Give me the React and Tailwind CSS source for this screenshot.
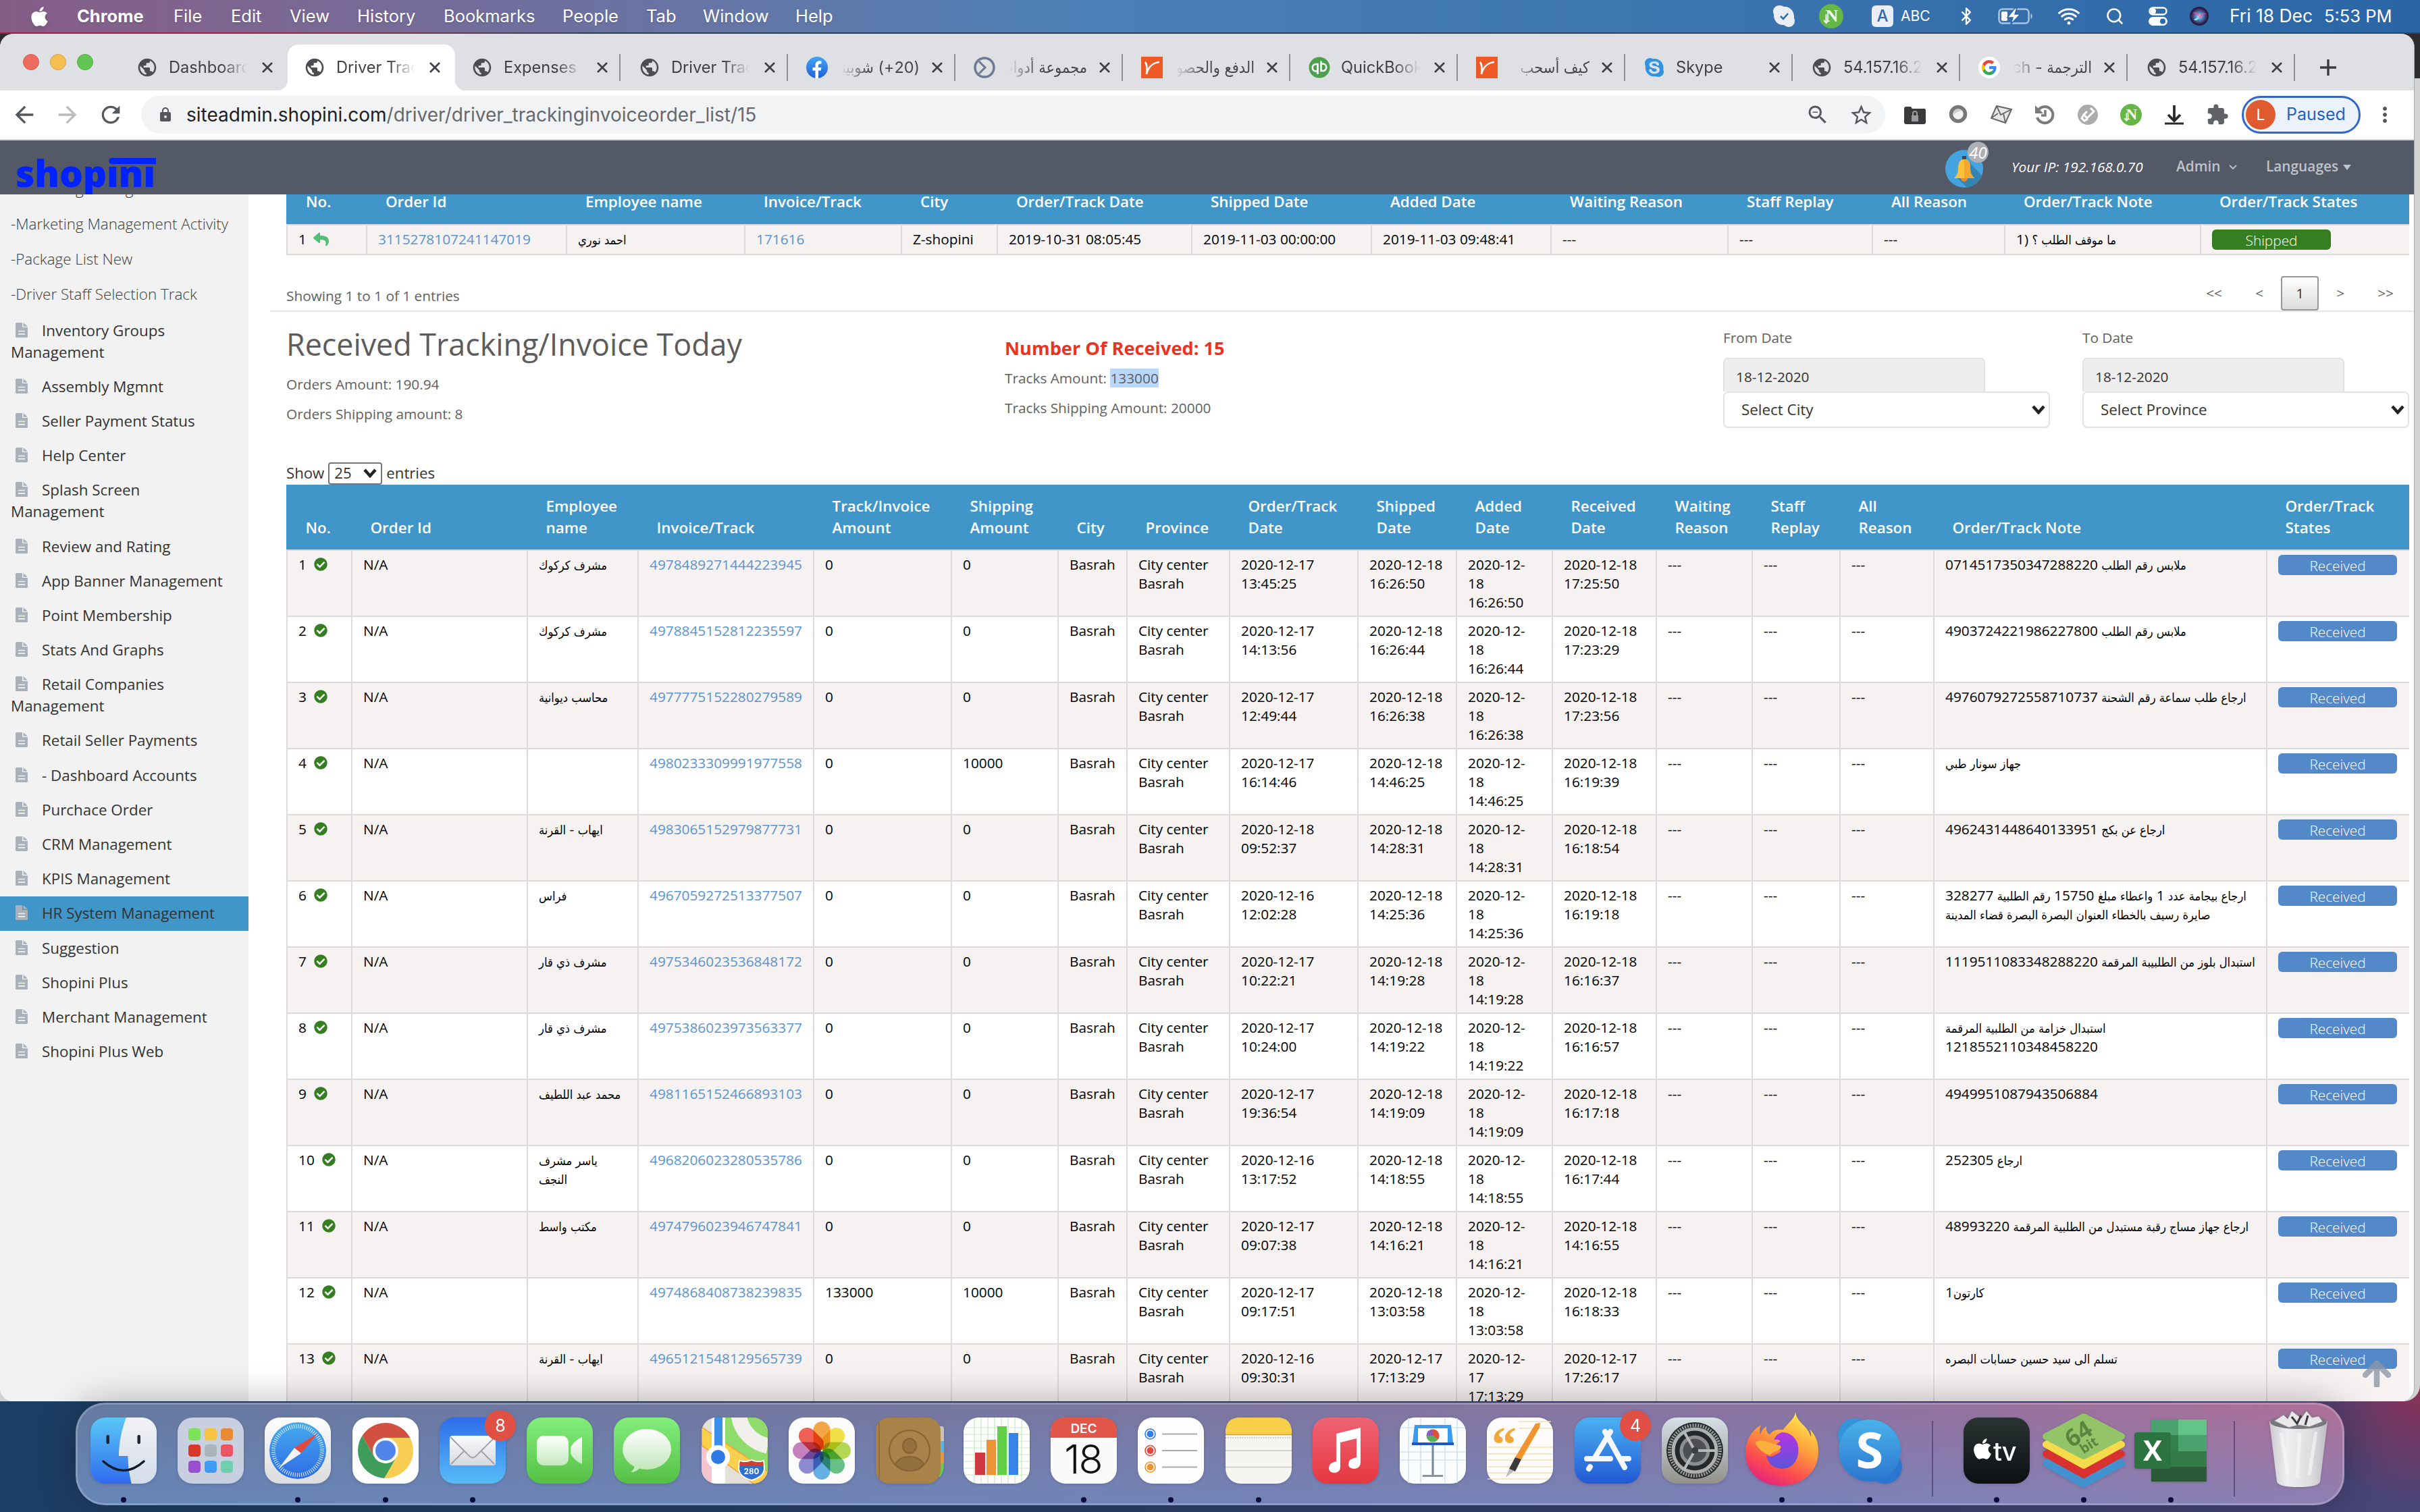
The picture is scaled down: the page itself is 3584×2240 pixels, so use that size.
import React from "react";
import { MdArrowBack, MdArrowForward, MdRefresh, MdLock, MdStarBorder, MdExtension, MdMoreVert, MdZoomOut, MdPublic } from "react-icons/md";
import { FaApple, FaCheckCircle, FaReply } from "react-icons/fa";
import { IoWifi, IoLogoSkype } from "react-icons/io5";
import { Search, Bluetooth } from "lucide-react";

/* ---------- text helpers ---------- */

const ARABIC = /([\u0600-\u06FF]+(?: +[\u0600-\u06FF]+)*)/;

function Mixed({ children }) {
  return children.split(ARABIC).map((part, i) =>
    i % 2 ? (
      <span key={i} className="font-['DejaVu_Sans_Condensed','DejaVu_Sans',sans-serif] text-[18.2px] leading-none">
        {part}
      </span>
    ) : (
      part
    )
  );
}

const Lines = ({ items }) =>
  items.map((line, i) => (
    <div key={i} className="whitespace-nowrap">
      <Mixed>{line}</Mixed>
    </div>
  ));

/* ---------- menu bar ---------- */

const MENUS = [
  ["Chrome", "w-[143px] font-bold"],
  ["File", "w-[85px]"],
  ["Edit", "w-[87px]"],
  ["View", "w-[100px]"],
  ["History", "w-[128px]"],
  ["Bookmarks", "w-[176px]"],
  ["People", "w-[124px]"],
  ["Tab", "w-[84px]"],
  ["Window", "w-[137px]"],
  ["Help", "w-[60px]"],
];

function NBadge({ className }) {
  return (
    <svg viewBox="0 0 36 36" className={className}>
      <circle cx="18" cy="18" r="18" fill="#64b745" />
      <text x="19" y="26" textAnchor="middle" fontFamily="Liberation Serif, serif" fontWeight="700" fontSize="26" fill="#f0f6ec">N</text>
      <path d="M10.500 15v13m-3.500-4l3.500 4 3.500-4" stroke="#f0f6ec" strokeWidth="2" fill="none" />
    </svg>
  );
}

function MenuBar() {
  return (
    <div className="flex h-12 shrink-0 items-center bg-linear-to-r from-[#865d87] via-[#4a80b6] via-45% to-[#2a66a6] font-['Inter',sans-serif] text-[25.5px] text-white">
      <div className="flex w-[114px] pl-[42px]">
        <FaApple className="size-[33px] drop-shadow-md" />
      </div>
      <div className="flex text-shadow-sm">
        {MENUS.map(([label, cls]) => (
          <div key={label} className={cls}>{label}</div>
        ))}
      </div>
      <div className="ml-auto flex w-[958px] items-center">
        <svg viewBox="0 0 32 32" className="w-8">
          <path d="M9 0C4 0 0 4 0 9c0 2 .6 3 1 4-.8 9 6 17 15 16 1 .6 4 3 7 3 5 0 9-4 9-9 0-2-.6-3-1-4C32 9 25 1 16 2 14 .7 12 0 9 0z" fill="#e9eef5" />
          <path d="M11 16l4 4 7-8" stroke="#2f6ca8" strokeWidth="2.600" fill="none" />
        </svg>
        <NBadge className="ml-9 w-9" />
        <div className="ml-[42px] flex size-8 items-center justify-center rounded-[6px] bg-[#e9eef5] text-[24px] font-medium text-[#2f6ca8]">A</div>
        <div className="ml-[11px] w-[43px] text-[21px]">ABC</div>
        <Bluetooth className="ml-10 size-[28px]" strokeWidth={2} />
        <svg viewBox="0 0 54 26" className="ml-[33px] w-[54px]">
          <rect x="1.500" y="2.500" width="44" height="21" rx="5" stroke="#a9c5e2" strokeWidth="2.500" fill="none" />
          <rect x="5" y="6" width="9" height="14" rx="2" fill="#fff" />
          <path d="M25 1L14 15h8l-3 10L33 10h-8l3-9z" fill="#fff" stroke="#2d6aaa" strokeWidth="1.500" />
          <path d="M48.500 9v8c3-1 3-7 0-8z" fill="#a9c5e2" />
        </svg>
        <IoWifi className="ml-[32px] size-[38px]" />
        <Search className="ml-[35px] size-[28px]" strokeWidth={2.2} />
        <svg viewBox="0 0 28 28" className="ml-[36px] w-7">
          <rect x="1.500" y="1.500" width="25" height="10" rx="5" stroke="#fff" strokeWidth="2.400" fill="none" />
          <circle cx="7" cy="6.500" r="4" fill="#fff" />
          <rect y="15" width="28" height="13" rx="6.500" fill="#fff" />
          <circle cx="21" cy="21.500" r="4" fill="#2d6aaa" />
        </svg>
        <svg viewBox="0 0 28 28" className="ml-[33px] w-7">
          <defs>
            <radialGradient id="siri">
              <stop offset="0" stopColor="#e8fbff" />
              <stop offset=".4" stopColor="#5d8fd0" />
              <stop offset="1" stopColor="#2a1c44" />
            </radialGradient>
          </defs>
          <circle cx="14" cy="14" r="14" fill="#2a1c44" />
          <circle cx="14" cy="14" r="12" fill="url(#siri)" />
          <path d="M4 9c7-3 11 1 10 5 3-5 7-6 11-3-5 0-8 3-10 7-2-5-6-7-11-9z" fill="#e0559a" opacity=".7" />
          <path d="M14 14l-8 5c4 3 7 0 8-5z" fill="#6ff0e0" />
        </svg>
        <div className="ml-[31px] w-[140px] text-[26.400px]">Fri 18 Dec</div>
        <div className="text-[25.500px]">5:53 PM</div>
      </div>
    </div>
  );
}

/* ---------- browser tabs ---------- */

const Globe = () => <MdPublic className="size-[34px] text-[#4b4d51]" />;

const Facebook = () => (
  <svg viewBox="0 0 32 32" className="size-8">
    <defs>
      <linearGradient id="fb" x2="0" y2="1">
        <stop stopColor="#41a5f5" />
        <stop offset="1" stopColor="#2160d8" />
      </linearGradient>
    </defs>
    <circle cx="16" cy="16" r="16" fill="url(#fb)" />
    <path d="M13.500 32V20.500H9.500V16h4v-3.500c0-4 2.400-6.200 6-6.200 1.700 0 3 .3 3 .3v4h-2c-2 0-2.500 1.200-2.500 2.500V16h4.400l-.7 4.500H18V32z" fill="#fff" />
  </svg>
);
const Ring = () => (
  <svg viewBox="0 0 32 32" className="size-8">
    <circle cx="16" cy="16" r="14" stroke="#6b7c93" strokeWidth="3.500" fill="none" />
    <path d="M8 7l9 9-9 9" stroke="#6b7c93" strokeWidth="3" fill="none" />
  </svg>
);
const Orange = () => (
  <svg viewBox="0 0 32 32" className="size-8">
    <path d="M0 0h32v32H0z" fill="#ee5a26" />
    <path d="M6 8c3 3 3 9 2 18 2-9 8-17 19-18" stroke="#fff" strokeWidth="2.600" fill="none" />
  </svg>
);
const QuickBooks = () => (
  <svg viewBox="0 0 32 32" className="size-8">
    <circle cx="16" cy="16" r="15.500" fill="#4c9f4c" />
    <path d="M14 21.500h-3a5 5 0 0 1 0-10.500h2.500v15M18 10.500h3a5 5 0 0 1 0 10.500h-2.500V6.500" stroke="#fff" strokeWidth="2.600" fill="none" />
  </svg>
);
const SkypeIcon = () => <IoLogoSkype className="size-[34px] text-[#2f93e0]" />;
const Google = () => (
  <svg viewBox="0 0 32 32" className="size-8">
    <circle cx="16" cy="16" r="16" fill="#fff" />
    <path d="M26.500 16.200c0-.8-.1-1.500-.2-2.200H16v4.300h5.900c-.3 1.400-1 2.500-2.200 3.300v2.800h3.600c2-1.900 3.200-4.700 3.200-8.200z" fill="#4285f4" />
    <path d="M16 27c2.900 0 5.400-1 7.200-2.600l-3.500-2.800c-1 .7-2.200 1.100-3.700 1.100-2.900 0-5.300-1.900-6.200-4.500H6.200V21A11 11 0 0 0 16 27z" fill="#34a853" />
    <path d="M9.800 18.200a6.600 6.600 0 0 1 0-4.300V11H6.200a11 11 0 0 0 0 10z" fill="#fbbc05" />
    <path d="M16 9.400c1.600 0 3 .6 4.200 1.600l3.100-3.100A11 11 0 0 0 6.200 11l3.600 2.900c.9-2.600 3.300-4.500 6.200-4.500z" fill="#ea4335" />
  </svg>
);

const TABS = [
  { Icon: Globe, title: "Dashboard" },
  { Icon: Globe, title: "Driver Track", active: true },
  { Icon: Globe, title: "Expenses", sep: true },
  { Icon: Globe, title: "Driver Track", sep: true },
  { Icon: Facebook, title: "(20+) شوبيني", rtl: true, sep: true },
  { Icon: Ring, title: "مجموعة أدوات", rtl: true, sep: true },
  { Icon: Orange, title: "الدفع والحصول", rtl: true, sep: true },
  { Icon: QuickBooks, title: "QuickBooks", sep: true },
  { Icon: Orange, title: "كيف أسحب", rtl: true, sep: true },
  { Icon: SkypeIcon, title: "Skype", sep: true },
  { Icon: Globe, title: "54.157.16.2", sep: true },
  { Icon: Google, title: "الترجمة - Search", rtl: true, sep: true },
  { Icon: Globe, title: "54.157.16.2", sep: true },
];

function Tab({ Icon, title, active, rtl, sep }) {
  return (
    <div className={active ? "relative flex h-[68px] w-[248px] items-center rounded-t-[16px] bg-white pl-6" : "relative flex h-[68px] w-[248px] items-center pl-6"}>
      {active && (
        <>
          <div className="absolute -left-4 bottom-0 size-4 bg-[radial-gradient(circle_at_0_0,transparent_16px,white_16.5px)]" />
          <div className="absolute -right-4 bottom-0 size-4 bg-[radial-gradient(circle_at_100%_0,transparent_16px,white_16.5px)]" />
        </>
      )}
      <div className="flex w-8 justify-center">
        <Icon />
      </div>
      {rtl ? (
        <div dir="rtl" className="ml-4 w-[120px] overflow-hidden whitespace-nowrap font-['Inter','DejaVu_Sans_Condensed','DejaVu_Sans',sans-serif] text-[23.4px] leading-9 text-[#45484c] [mask-image:linear-gradient(to_left,black_62%,transparent_97%)]">
          {title}
        </div>
      ) : (
        <div className="ml-4 w-[120px] overflow-hidden whitespace-nowrap text-[23.6px] leading-9 text-[#3e4145] [mask-image:linear-gradient(to_right,black_65%,transparent_97%)]">
          {title}
        </div>
      )}
      <svg viewBox="0 0 16 16" className="ml-[18px] size-4">
        <path d="M1 1l14 14M15 1L1 15" stroke="#3e4145" strokeWidth="2.700" />
      </svg>
      {sep && <div className="ml-[17px] h-10 w-[2px] bg-[#8b8e93]" />}
    </div>
  );
}

function TabStrip() {
  return (
    <div className="flex h-[84px] items-end bg-[#dee0e4] font-['Inter',sans-serif]">
      <div className="flex w-[178px] gap-4 self-center pl-[34px]">
        <div className="size-6 rounded-full border border-[#d95a50] bg-[#ec6a5e]" />
        <div className="size-6 rounded-full border border-[#dda23c] bg-[#f4bf50]" />
        <div className="size-6 rounded-full border border-[#50a93c] bg-[#61c654]" />
      </div>
      {TABS.map((t, i) => (
        <Tab key={i} {...t} />
      ))}
      <svg viewBox="0 0 24 24" className="mb-[22px] ml-[34px] size-6">
        <path d="M12 0v24M0 12h24" stroke="#3b3d41" strokeWidth="3.400" />
      </svg>
    </div>
  );
}

/* ---------- toolbar ---------- */

const Cell = ({ children }) => <div className="flex w-16 items-center justify-center">{children}</div>;

function Toolbar() {
  return (
    <div className="flex h-[74px] items-center border-b-2 border-[#d5d6de] bg-white font-['Inter',sans-serif]">
      <div className="flex w-[209px] text-[#54575b]">
        <MdArrowBack className="ml-4 size-10" />
        <MdArrowForward className="ml-6 size-10 text-[#b9bbbe]" />
        <MdRefresh className="ml-[24px] size-10" />
      </div>
      <div className="flex h-14 w-[2583px] items-center rounded-full bg-[#f1f3f4] pr-1 pl-[24px] text-[28px] text-[#66696e]">
        <MdLock className="size-[24px] text-[#54575b]" />
        <div className="ml-[19px] flex-1">
          <span className="text-[#202124]">siteadmin.shopini.com</span>/driver/driver_trackinginvoiceorder_list/15
        </div>
        <Cell><MdZoomOut className="size-9 text-[#54575b]" /></Cell>
        <Cell><MdStarBorder className="size-[37px] text-[#54575b]" /></Cell>
      </div>
      <div className="ml-3 flex">
        <Cell>
          <svg viewBox="0 0 34 28" className="w-[34px]">
            <path d="M1 5q0-3 3-3h7l2 3h18q2 0 2 3v17q0 3-3 3H4q-3 0-3-3z" fill="#3a3a3c" />
            <rect x="12" y="15" width="10" height="9" fill="#9a9a9c" />
            <path d="M14 15v-3q0-3 3-3t3 3v3" stroke="#9a9a9c" strokeWidth="2" fill="none" />
          </svg>
        </Cell>
        <Cell>
          <svg viewBox="0 0 28 30" className="w-7">
            <circle cx="14" cy="14" r="10.500" fill="#f2f2f2" stroke="#777" strokeWidth="5.500" />
            <path d="M7 10q6-6 13-1-8 0-12 6z" fill="#ccc" />
          </svg>
        </Cell>
        <Cell>
          <svg viewBox="0 0 34 30" className="w-[34px]">
            <path d="M10 2l22 5-9 20L2 20z" fill="#e6e6e6" stroke="#666" strokeWidth="2" />
            <path d="M10 2l6 13L32 7M2 20l10-7M23 27l-3-14" stroke="#666" strokeWidth="1.800" fill="none" />
          </svg>
        </Cell>
        <Cell>
          <svg viewBox="0 0 32 32" className="w-8">
            <path d="M6 10a12 12 0 1 1-1 10" stroke="#7b7b7b" strokeWidth="4" fill="none" />
            <path d="M2 2v12h12z" fill="#7b7b7b" />
            <path d="M17 9v8h-6" stroke="#7b7b7b" strokeWidth="3.500" fill="none" />
          </svg>
        </Cell>
        <Cell>
          <svg viewBox="0 0 32 32" className="w-8">
            <circle cx="16" cy="16" r="15" fill="#a9abad" />
            <path d="M20 6l5 5-10 10-5-5 5-5M10 16l-3 5 4 4 5-3" stroke="#fff" strokeWidth="3" fill="none" />
          </svg>
        </Cell>
        <Cell><NBadge className="w-8" /></Cell>
        <Cell>
          <svg viewBox="0 0 30 30" className="w-[30px]">
            <path d="M15 1v22M6 15l9 9 9-9" stroke="#2a2a2a" strokeWidth="3.800" fill="none" />
            <path d="M1 28h28" stroke="#2a2a2a" strokeWidth="3" />
          </svg>
        </Cell>
        <Cell><MdExtension className="size-[34px] text-[#5f6368]" /></Cell>
      </div>
      <div className="ml-1 flex h-14 w-[176px] items-center rounded-full border-[3px] border-[#2f66cc] bg-[#ecf2fa] pl-[3px]">
        <div className="flex size-11 items-center justify-center rounded-full bg-[#e05a30] text-[23px] text-white">L</div>
        <div className="ml-[16px] text-[25px] text-[#2a5fc0]">Paused</div>
      </div>
      <MdMoreVert className="ml-[18px] size-9 text-[#54575b]" />
    </div>
  );
}

/* ---------- site header ---------- */

function SiteHeader() {
  return (
    <div className="relative z-10 flex h-20 overflow-hidden bg-[#535966] text-[20.8px]">
      <div className="relative ml-[23px] h-20 text-[55px] leading-[68px] font-extrabold tracking-[-0.2px] text-[#0022ff]">
        <div className="pt-[14px]">shopini</div>
        <div className="absolute top-[26px] -right-px h-[9px] w-[65px] bg-[#0022ff]" />
      </div>
      <div className="ml-auto flex w-[694px] items-center">
        <div className="relative">
          <svg viewBox="0 0 56 56" className="mt-1 w-14">
            <circle cx="28" cy="28" r="28" fill="#45a3df" />
            <path d="M33 16l21 22a28 28 0 0 1-22 18L18 42z" fill="#3583b0" />
            <rect x="25" y="9" width="6" height="8" fill="#44444c" />
            <path d="M28 14c7 0 9 6 9 13 0 8 2 10 6 15H13c4-5 6-7 6-15 0-7 2-13 9-13z" fill="#fbc13a" />
            <path d="M28 14c7 0 9 6 9 13 0 8 2 10 6 15H28z" fill="#f5a82e" />
            <path d="M23 42a5 5 0 0 0 10 0z" fill="#ee8a28" />
          </svg>
          <div className="absolute -top-2 left-[33px] flex size-[31px] items-center justify-center rounded-full bg-[#aeb0b4] text-[24px] text-white italic">40</div>
        </div>
        <div className="ml-[42px] w-[244px] text-white italic">Your IP: 192.168.0.70</div>
        <div className="-mt-0.5 w-[78px] font-semibold text-[#bfc2c9]">Admin</div>
        <svg viewBox="0 0 12 8" className="w-3">
          <path d="M1 1l5 5 5-5" stroke="#bfc2c9" strokeWidth="1.800" fill="none" />
        </svg>
        <div className="-mt-0.5 ml-[43px] font-semibold text-[#bfc2c9]">Languages</div>
        <svg viewBox="0 0 12 8" className="ml-[7px] w-3">
          <path d="M0 0h12l-6 8z" fill="#bfc2c9" />
        </svg>
      </div>
    </div>
  );
}

/* ---------- sidebar ---------- */

const SUB_ITEMS = ["-Marketing Management", "-Marketing Management Activity", "-Package List New", "-Driver Staff Selection Track"];
const ITEMS = [
  "Inventory Groups Management", "Assembly Mgmnt", "Seller Payment Status", "Help Center", "Splash Screen Management",
  "Review and Rating", "App Banner Management", "Point Membership", "Stats And Graphs", "Retail Companies Management",
  "Retail Seller Payments", "- Dashboard Accounts", "Purchace Order", "CRM Management", "KPIS Management",
  "HR System Management", "Suggestion", "Shopini Plus", "Merchant Management", "Shopini Plus Web",
];

function FileIcon() {
  return (
    <svg viewBox="0 0 18 22" className="mr-[21px] ml-[7px] inline-block w-[18px] align-[-2px]">
      <path d="M1.500 0H10v7h8v13.500q0 1.500-1.500 1.500h-15Q0 22 0 20.500v-19Q0 0 1.500 0z" fill="#a9b1bb" />
      <path d="M11.500 0L18 5.800h-6.500z" fill="#a9b1bb" />
      <path d="M4 12.500h10M4 16.800h10" stroke="#f2f2f2" strokeWidth="1.700" />
    </svg>
  );
}

function Sidebar() {
  return (
    <div className="w-[368px] shrink-0 bg-[#f2f2f2] text-[22.4px] text-[#333]">
      <div className="-mt-[34px]">
        <div className="mb-[2px]">
          {SUB_ITEMS.map((t) => (
            <div key={t} className="h-[52px] pl-4 leading-[52px] font-light whitespace-nowrap text-[#3c3c3c]">{t}</div>
          ))}
        </div>
        {ITEMS.map((t) => (
          <div key={t} className={t === "HR System Management" ? "bg-[#4096c8] py-[9.6px] pr-8 pl-4 leading-8" : "py-[9.6px] pr-6 pl-4 leading-8"}>
            <FileIcon />
            {t}
          </div>
        ))}
      </div>
    </div>
  );
}

/* ---------- tables ---------- */

const TOP_COLS = "grid grid-cols-[118px_296px_264px_232px_142px_288px_266px_266px_262px_214px_196px_290px_310px]";
const TOP_HEAD = ["No.", "Order Id", "Employee name", "Invoice/Track", "City", "Order/Track Date", "Shipped Date", "Added Date", "Waiting Reason", "Staff Replay", "All Reason", "Order/Track Note", "Order/Track States"];
const TOP_ROW = ["احمد نوري", "171616", "Z-shopini", "2019-10-31 08:05:45", "2019-11-03 00:00:00", "2019-11-03 09:48:41", "---", "---", "---", "ما موقف الطلب ؟ (1"];

const COLS = "grid grid-cols-[96px_260px_164px_260px_204px_158px_102px_152px_190px_146px_142px_154px_142px_130px_139px_493px_212px]";
const HEAD = [
  ["No."], ["Order Id"], ["Employee", "name"], ["Invoice/Track"], ["Track/Invoice", "Amount"], ["Shipping", "Amount"], ["City"], ["Province"],
  ["Order/Track", "Date"], ["Shipped", "Date"], ["Added", "Date"], ["Received", "Date"], ["Waiting", "Reason"], ["Staff", "Replay"], ["All", "Reason"],
  ["Order/Track Note"], ["Order/Track", "States"],
];

const ROWS = [
  [["مشرف كركوك"], "4978489271444223945", "0", "0", "2020-12-17 13:45:25", "2020-12-18 16:26:50", "2020-12-18 17:25:50", ["ملابس رقم الطلب 0714517350347288220"]],
  [["مشرف كركوك"], "4978845152812235597", "0", "0", "2020-12-17 14:13:56", "2020-12-18 16:26:44", "2020-12-18 17:23:29", ["ملابس رقم الطلب 4903724221986227800"]],
  [["محاسب ديوانية"], "4977775152280279589", "0", "0", "2020-12-17 12:49:44", "2020-12-18 16:26:38", "2020-12-18 17:23:56", ["ارجاع طلب سماعة رقم الشحنة 4976079272558710737"]],
  [[], "4980233309991977558", "0", "10000", "2020-12-17 16:14:46", "2020-12-18 14:46:25", "2020-12-18 16:19:39", ["جهاز سونار طبي"]],
  [["ايهاب - القرنة"], "4983065152979877731", "0", "0", "2020-12-18 09:52:37", "2020-12-18 14:28:31", "2020-12-18 16:18:54", ["ارجاع عن بكج 4962431448640133951"]],
  [["فراس"], "4967059272513377507", "0", "0", "2020-12-16 12:02:28", "2020-12-18 14:25:36", "2020-12-18 16:19:18", ["ارجاع بيجامة عدد 1 واعطاء مبلغ 15750 رقم الطلبية 328277", "صايرة رسيف بالخطاء العنوان البصرة البصرة قضاء المدينة"]],
  [["مشرف ذي قار"], "4975346023536848172", "0", "0", "2020-12-17 10:22:21", "2020-12-18 14:19:28", "2020-12-18 16:16:37", ["استبدال بلوز من الطلبيبة المرقمة 1119511083348288220"]],
  [["مشرف ذي قار"], "4975386023973563377", "0", "0", "2020-12-17 10:24:00", "2020-12-18 14:19:22", "2020-12-18 16:16:57", ["استبدال خزامة من الطلبية المرقمة", "1218552110348458220"]],
  [["محمد عبد اللطيف"], "4981165152466893103", "0", "0", "2020-12-17 19:36:54", "2020-12-18 14:19:09", "2020-12-18 16:17:18", ["4949951087943506884"]],
  [["ياسر مشرف", "النجف"], "4968206023280535786", "0", "0", "2020-12-16 13:17:52", "2020-12-18 14:18:55", "2020-12-18 16:17:44", ["ارجاع 252305"]],
  [["مكتب واسط"], "4974796023946747841", "0", "0", "2020-12-17 09:07:38", "2020-12-18 14:16:21", "2020-12-18 14:16:55", ["ارجاع جهاز مساج رقبة مستبدل من الطلبية المرقمة 48993220"]],
  [[], "4974868408738239835", "133000", "10000", "2020-12-17 09:17:51", "2020-12-18 13:03:58", "2020-12-18 16:18:33", ["كارتون1"]],
  [["ايهاب - القرنة"], "4965121548129565739", "0", "0", "2020-12-16 09:30:31", "2020-12-17 17:13:29", "2020-12-17 17:26:17", ["تسلم الى سيد حسين حسابات البصره"]],
];

const Td = ({ children, className = "" }) => <div className={`border-l-2 border-[#dcdbdb] pt-1.5 pl-4 ${className}`}>{children}</div>;

function TopTable() {
  return (
    <div className="mr-2 ml-14">
      <div className={`${TOP_COLS} h-11 bg-[#4096c8] text-[22.4px] leading-8 font-semibold whitespace-nowrap text-white`}>
        {TOP_HEAD.map((h) => (
          <div key={h} className="-mt-[5px] pl-[29px]">{h}</div>
        ))}
      </div>
      <div className={`${TOP_COLS} h-[46px] border-y-2 border-[#dcdbdb] bg-[#f5f2f1] leading-7 text-black`}>
        <Td>
          <div className="flex items-center">
            1 <FaReply className="ml-[10px] size-[23px] text-[#55bd78]" />
          </div>
        </Td>
        <Td className="text-[#5b94cf]">3115278107241147019</Td>
        {TOP_ROW.map((t, i) => (
          <Td key={i} className={i === 1 ? "text-[#5b94cf]" : "whitespace-nowrap"}><Mixed>{t}</Mixed></Td>
        ))}
        <Td>
          <div className="h-[30px] w-[176px] rounded-[6px] bg-[#367e22] pt-[2px] text-center font-light text-white">Shipped</div>
        </Td>
      </div>
    </div>
  );
}

function MainTable() {
  return (
    <div className="mr-2 ml-14">
      <div className={`${COLS} h-24 items-end bg-[#4096c8] pb-[16px] text-[22.4px] leading-8 font-semibold whitespace-nowrap text-white`}>
        {HEAD.map((h, i) => (
          <div key={i} className="pl-[28.5px]">
            {h.map((l) => <div key={l}>{l}</div>)}
          </div>
        ))}
      </div>
      {ROWS.map(([emp, track, amt, ship, ordered, shipped, received, note], i) => (
        <div key={i} className={`${COLS} h-[98px] border-t-2 border-[#dcdbdb] leading-7 text-black odd:bg-white even:bg-[#f5f2f1]`}>
          <Td>
            <div className="flex items-center">
              {i + 1} <FaCheckCircle className="ml-[11px] size-5 text-[#367e22]" />
            </div>
          </Td>
          <Td>N/A</Td>
          <Td><Lines items={emp} /></Td>
          <Td className="text-[#5b94cf]">{track}</Td>
          <Td>{amt}</Td>
          <Td>{ship}</Td>
          <Td>Basrah</Td>
          <Td><Lines items={["City center", "Basrah"]} /></Td>
          <Td><Lines items={ordered.split(" ")} /></Td>
          <Td><Lines items={shipped.split(" ")} /></Td>
          <Td><Lines items={[shipped.slice(0, 8), shipped.slice(8, 10), shipped.slice(11)]} /></Td>
          <Td><Lines items={received.split(" ")} /></Td>
          <Td>---</Td>
          <Td>---</Td>
          <Td>---</Td>
          <Td><Lines items={note} /></Td>
          <Td>
            <div className="h-[30px] w-[176px] rounded-[6px] bg-[#5389c8] pt-[2px] text-center font-light text-white">Received</div>
          </Td>
        </div>
      ))}
    </div>
  );
}

const Chevron = () => (
  <svg viewBox="0 0 20 14" className="w-5">
    <path d="M2 2l8 9 8-9" stroke="#222" strokeWidth="4.500" fill="none" />
  </svg>
);

function DateFilter({ label, option }) {
  return (
    <div className="w-[484px] pt-6 leading-7">
      <div>{label}</div>
      <div className="mt-4 h-[50px] w-[388px] rounded-t-[7px] border-2 border-b-0 border-[#e2e2e2] bg-[#eee] pt-[12px] pl-[17px] text-[#333]">18-12-2020</div>
      <div className="flex h-[54px] items-center justify-between rounded-[7px] border-2 border-[#e2e2e2] bg-white pr-[5px] pl-[25px] text-[22.4px] text-[#333]">
        {option}
        <Chevron />
      </div>
    </div>
  );
}

function Content() {
  return (
    <div className="relative flex-1 bg-white text-[20.8px] text-[#5f5f5f]">
      <TopTable />
      <div className="ml-14 flex h-[82px] justify-between pt-[31px]">
        <div className="pt-[15px] leading-7">Showing 1 to 1 of 1 entries</div>
        <div className="mr-[31px] flex h-[51px] items-center">
          <div className="w-[73px]">&lt;&lt;</div>
          <div className="w-[38px]">&lt;</div>
          <div className="flex h-[51px] w-14 items-center justify-center rounded-[4px] border-2 border-[#979797] bg-linear-to-b from-white to-[#dcdcdc] text-[#333]">1</div>
          <div className="ml-[26px] w-[61px]">&gt;</div>
          <div>&gt;&gt;</div>
        </div>
      </div>
      <div className="ml-8 h-[2px] bg-[#e5e5e5]" />
      <div className="mr-2 ml-14 grid h-[222px] grid-cols-[1064px_1064px_532px_484px] leading-7">
        <div className="pt-[18px]">
          <div className="text-[44.8px] leading-[60px] text-[#5c5c5c]">Received Tracking/Invoice Today</div>
          <div className="mt-[15px]">Orders Amount: 190.94</div>
          <div className="mt-4">Orders Shipping amount: 8</div>
        </div>
        <div className="pt-9">
          <div className="text-[27.2px] leading-9 font-bold text-[#ea3323]">Number Of Received: 15</div>
          <div className="mt-3">Tracks Amount: <span className="bg-[#b9d6fb]">133000</span></div>
          <div className="mt-4">Tracks Shipping Amount: 20000</div>
        </div>
        <DateFilter label="From Date" option="Select City" />
        <DateFilter label="To Date" option="Select Province" />
      </div>
      <div className="ml-14 flex h-[34px] items-center text-[22.2px] text-[#333]">
        Show
        <div className="mx-[6px] flex h-[33px] w-[80px] items-center justify-between rounded-[4px] border-2 border-[#767676] bg-white pr-[6px] pl-[7px]">
          25
          <Chevron />
        </div>
        entries
      </div>
      <MainTable />
      <svg viewBox="0 0 42 40" className="absolute right-[35px] bottom-[21px] w-[42px] opacity-80">
        <path d="M21 38V6M4 22L21 5l17 17" stroke="#8e99ab" strokeWidth="8.500" strokeLinecap="round" fill="none" />
      </svg>
    </div>
  );
}

/* ---------- dock ---------- */

const G = ({ id, a, b }) => (
  <linearGradient id={id} x1="0" y1="0" x2="0" y2="1">
    <stop stopColor={a} />
    <stop offset="1" stopColor={b} />
  </linearGradient>
);

const Base = ({ fill }) => <rect x="11" y="11" width="98" height="98" rx="22" fill={fill} />;

const Badge = ({ n }) => (
  <g>
    <circle cx="101" cy="23" r="23" fill="#e15045" />
    <text x="101" y="32" textAnchor="middle" fontFamily="Inter, sans-serif" fontSize="25" fill="#fff">{n}</text>
  </g>
);

const Finder = () => (
  <>
    <defs><G id="fi" a="#5ac8f5" b="#2f6bef" /><G id="fr" a="#f1f2f4" b="#d3dcea" /><clipPath id="sq"><rect x="11" y="11" width="98" height="98" rx="22" /></clipPath></defs>
    <Base fill="url(#fi)" />
    <path clipPath="url(#sq)" d="M64 11C57 30 53 48 53 68H66.500C66.500 84 69 98 72 110H110V11z" fill="url(#fr)" />
    <path d="M36.700 39v9M82.700 39v9" stroke="#1c2733" strokeWidth="4.500" strokeLinecap="round" />
    <path d="M30 76Q60 103 90 76" stroke="#111c28" strokeWidth="3.500" fill="none" strokeLinecap="round" />
  </>
);
const LP = ["#7ee35a", "#f6c443", "#e98a37", "#d8382c", "#a9b4bb", "#ec5566", "#9a4fd0", "#3f9cf5", "#6fcfae"];
const Launchpad = () => (
  <>
    <Base fill="#c8cfdf" />
    {LP.map((c, i) => <rect key={i} x={27 + (i % 3) * 24} y={27 + Math.floor(i / 3) * 24} width="18" height="18" rx="4.500" fill={c} />)}
  </>
);
const Safari = () => (
  <>
    <defs><G id="sb" a="#fdfdfd" b="#dcdcde" /><G id="sc" a="#46abee" b="#2d6be4" /></defs>
    <Base fill="url(#sb)" />
    <circle cx="60" cy="60" r="42" fill="url(#sc)" />
    <circle cx="60" cy="60" r="36" fill="none" stroke="#d6eafc" strokeWidth="6" strokeDasharray="1.100 2.041" />
    <path d="M90 34L65 64 55 56z" fill="#e5493d" />
    <path d="M32 86L55 56 65 64z" fill="#f4f4f4" />
  </>
);
const CH = "M60 41L96.300 41A41 41 0 0 0 25.400 38.100L43.550 69.500L60 60Z";
const ChromeIcon = () => (
  <>
    <Base fill="#fdfdfd" />
    <path d={CH} fill="#d2503f" />
    <path d={CH} fill="#3f9d5c" transform="rotate(-120 60 60)" />
    <path d={CH} fill="#f8ce52" transform="rotate(120 60 60)" />
    <circle cx="60" cy="60" r="19" fill="#fff" />
    <circle cx="60" cy="60" r="15" fill="#5085ec" />
  </>
);
const Mail = () => (
  <>
    <defs><G id="ml" a="#2f6ceb" b="#56bdf7" /><G id="mv" a="#fbfbfb" b="#d5d8dc" /></defs>
    <Base fill="url(#ml)" />
    <rect x="26" y="38" width="68" height="44" rx="4" fill="url(#mv)" />
    <path d="M28 80l20-20M92 80L72 60M27 40l29 29q4 3 8 0l29-29" stroke="#9da1a8" strokeWidth="1.800" fill="none" />
    <Badge n="8" />
  </>
);
const FaceTime = () => (
  <>
    <defs><G id="gr" a="#83ee7c" b="#55bf45" /><G id="wh" a="#ffffff" b="#c4e8bf" /></defs>
    <Base fill="url(#gr)" />
    <rect x="26" y="38" width="47" height="44" rx="10" fill="url(#wh)" />
    <path d="M76 55q7-11 17-15v40q-10-4-17-15z" fill="url(#wh)" />
  </>
);
const Messages = () => (
  <>
    <defs><G id="gm" a="#83ee7c" b="#55bf45" /><G id="wm" a="#ffffff" b="#c0e6ba" /></defs>
    <Base fill="url(#gm)" />
    <ellipse cx="60" cy="58" rx="36" ry="30" fill="url(#wm)" />
    <path d="M42 80q0 8-6 12 9 0 15-8z" fill="#c6e9c0" />
  </>
);
const Maps = () => (
  <>
    <defs><clipPath id="mp"><rect x="11" y="11" width="98" height="98" rx="22" /></clipPath></defs>
    <g clipPath="url(#mp)">
      <path d="M11 11h98v98H11z" fill="#e3e0d8" />
      <path d="M46 11h63v98L46 55z" fill="#8fdc6c" />
      <path d="M11 50h15v60H11z" fill="#f4c5cf" />
      <path d="M11 25L109 91v30L88 109 11 52z" fill="#fbd04f" stroke="#f19f3c" strokeWidth="1.500" />
      <path d="M26 11h20v98H26z" fill="#fff" />
      <path d="M30 11h12v50H30z" fill="#3b8fea" />
      <path d="M109 53A54 54 0 0 1 66 8" stroke="#f1efeb" strokeWidth="23" fill="none" />
      <circle cx="35.500" cy="69.500" r="17.500" fill="#fff" />
      <circle cx="35.500" cy="69.500" r="10.500" fill="#2f7be5" />
      <path d="M67 75q9 3 18-1 9 4 18 1l1 12q-1 12-19 17-18-5-19-17z" fill="#2f70cc" stroke="#fff" strokeWidth="2" />
      <path d="M68 76q9 3 17-1 9 4 17 1l1 6H67z" fill="#d0402f" />
      <text x="85" y="95" textAnchor="middle" fontFamily="Inter, sans-serif" fontWeight="700" fontSize="11.500" fill="#fff">280</text>
    </g>
  </>
);
const PETALS = ["#f39a2d", "#f0dc30", "#a9d33c", "#52b873", "#4fa4e0", "#7e7cca", "#bd6fb4", "#ee4a3c"];
const Photos = () => (
  <>
    <Base fill="#fcfcfc" />
    <g className="isolate">
      {PETALS.map((c, i) => <rect key={i} x="47.500" y="17" width="25" height="42" rx="12.500" fill={c} opacity=".88" transform={`rotate(${i * 45} 60 60)`} className="mix-blend-multiply" />)}
    </g>
  </>
);
const Contacts = () => (
  <>
    <path d="M90 24h19q3 0 3 4v19H90z" fill="#c9c4b8" />
    <path d="M90 46h22v18H90z" fill="#58b4e8" />
    <path d="M90 63h22v17H90z" fill="#ee9434" />
    <path d="M90 79h22q0 14-6 20H90z" fill="#6cc94f" />
    <rect x="11" y="11" width="96" height="98" rx="20" fill="#a9824a" />
    <path d="M16 18v84" stroke="#94703d" strokeWidth="2" />
    <g stroke="#866435" strokeWidth="2.200">
      <circle cx="61" cy="60" r="30" fill="none" />
      <ellipse cx="61" cy="53" rx="10" ry="11" fill="#94703d" />
      <path d="M40 80q6-11 21-11t21 11q-8 10-21 10T40 80z" fill="#94703d" />
    </g>
  </>
);
const Numbers = () => (
  <>
    <defs><clipPath id="nu"><rect x="11" y="11" width="98" height="98" rx="22" /></clipPath></defs>
    <Base fill="#fdfdfd" />
    <path clipPath="url(#nu)" d="M11 26h98M11 36h98M11 46h98M11 56h98M11 66h98M11 76h98M11 86h98M11 96h98M27 11v98M37 11v98M47 11v98M57 11v98M67 11v98M77 11v98M87 11v98M97 11v98" stroke="#c5ebc0" strokeWidth="1.200" fill="none" />
    <path d="M28 63h15v33H28z" fill="#cf3a42" />
    <path d="M45 44h14v52H45z" fill="#ec9336" />
    <path d="M61 24h14v72H61z" fill="#63cf47" />
    <path d="M78 34h14v62H78z" fill="#3584ea" />
  </>
);
const Calendar = () => (
  <>
    <Base fill="#fafafa" />
    <path d="M11 41V33Q11 11 33 11H87Q109 11 109 33V41z" fill="#e25549" />
    <text x="60" y="34" textAnchor="middle" fontFamily="Inter, sans-serif" fontWeight="600" fontSize="19" fill="#fff">DEC</text>
    <text x="59" y="94" textAnchor="middle" fontFamily="Inter, sans-serif" fontWeight="300" fontSize="59" letterSpacing="-2" fill="#111">18</text>
  </>
);
const Reminders = () => (
  <>
    <Base fill="#fdfdfd" />
    {["#2f7cf0", "#e2493a", "#ec9431"].map((c, i) => (
      <g key={c}>
        <circle cx="29.500" cy={35.500 + i * 24.500} r="7.500" fill="#fff" stroke={c} strokeWidth="1.600" />
        <circle cx="29.500" cy={35.500 + i * 24.500} r="5" fill={c} />
        <path d={`M47 ${35.500 + i * 24.500}h52`} stroke="#aaa9ae" strokeWidth="2" />
      </g>
    ))}
  </>
);
const Notes = () => (
  <>
    <Base fill="#f7f5f1" />
    <path d="M11 36V33Q11 11 33 11H87Q109 11 109 33V36z" fill="#f8cf4a" />
    <path d="M11 36.500h98" stroke="#c3a443" strokeWidth="1.500" />
    <path d="M11 41h98" stroke="#b9b5ae" strokeWidth="1.500" strokeDasharray="1.500 2" />
    <path d="M11 60h98M11 84.500h98" stroke="#d2d0cc" strokeWidth="1.800" />
  </>
);
const Music = () => (
  <>
    <defs><G id="mu" a="#ef6475" b="#e63740" /></defs>
    <Base fill="url(#mu)" />
    <path d="M46 35l36-9v51q0 9-9 10-9 0-9-7 0-8 12-10V42L52 48v36q0 8-8 9-9 0-9-7 0-8 11-10z" fill="#fff" />
  </>
);
const Keynote = () => (
  <>
    <Base fill="#fbfcfd" />
    <path d="M24 12v96M42 12v96M78 12v96M96 12v96M12 26h96M12 62h96M12 74h96" stroke="#cfe3f4" strokeWidth="1.600" />
    <path d="M33 22h54l3 26H30z" fill="#3a9bef" />
    <path d="M38 27h44v21H38z" fill="#fff" />
    <circle cx="60" cy="38" r="9.500" fill="#54b45c" />
    <path d="M60 38V28.500a9.500 9.500 0 0 1 8 14.500z" fill="#e0503f" />
    <path d="M60 38l-9.500 0A9.500 9.500 0 0 1 60 28.500z" fill="#8c5fc0" />
    <path d="M29 48h62v4H29z" fill="#1f55c8" />
    <path d="M58.500 52h3v44h-3z" fill="#77839a" />
    <path d="M45 96h30v3H45z" fill="#8d949c" />
  </>
);
const Pages = () => (
  <>
    <Base fill="#fdfcfa" />
    <path d="M58 17h48M58 27h50M12 55h96M12 65h96M12 74h96M12 84h96M12 93h96M12 102h90" stroke="#f6ddb4" strokeWidth="1.600" />
    <text x="18" y="76" fontFamily="Liberation Serif, serif" fontWeight="700" fontSize="74" fill="#f0a83c">“</text>
    <path d="M83 20l7-1-1 7L62 73l-9-3z" fill="#ef9430" />
    <path d="M53 70l9 3-9 18-9-4z" fill="#3c3a3a" />
    <path d="M44 87l7 3-12 10z" fill="#b9bcc0" />
  </>
);
const AppStore = () => (
  <>
    <defs><G id="as" a="#4bb1f2" b="#2259d4" /></defs>
    <Base fill="url(#as)" />
    <g stroke="#f4f8fd" strokeWidth="8" strokeLinecap="round">
      <path d="M64 32L40 72M56 32l29 53M29 72h35M79 72h12M34 84l-2 3" />
    </g>
    <Badge n="4" />
  </>
);
const Settings = () => (
  <>
    <defs><G id="se" a="#d6e1e6" b="#92908b" /></defs>
    <Base fill="url(#se)" />
    <circle cx="60" cy="60" r="42" fill="#24292c" />
    <circle cx="60" cy="60" r="37.500" fill="none" stroke="#9a9a98" strokeWidth="5" strokeDasharray="2.200 1.727" />
    <circle cx="60" cy="60" r="32" fill="none" stroke="#aeb0b0" strokeWidth="5" />
    <circle cx="60" cy="60" r="20" fill="#4c5053" stroke="#8d8f8f" strokeWidth="5" />
    <path d="M60 60h32M60 60L44 32M60 60L44 88" stroke="#b5b8b8" strokeWidth="4" />
    <circle cx="60" cy="60" r="5" fill="#3a3e40" />
  </>
);
const Firefox = () => (
  <>
    <defs>
      <linearGradient id="ff" x1=".8" y1="0" x2=".3" y2="1">
        <stop stopColor="#fff04f" /><stop offset=".4" stopColor="#fda23c" /><stop offset=".75" stopColor="#fb4b4f" /><stop offset="1" stopColor="#e4247f" />
      </linearGradient>
      <G id="fp" a="#b833e1" b="#5a54d8" />
    </defs>
    <path d="M80 3c-2 12-12 16-18 26q-14-2-20 7-6-2-5-12-7 4-9 12-2-6 1-14C12 32 6 48 6 64c0 30 24 48 54 48s54-20 54-50c0-15-4-25-13-34q3 8 2 12C98 22 83 20 80 3z" fill="url(#ff)" />
    <path d="M60 33q16 0 23 16 4 16-3 27t-20 11q-20-2-23-20 6 4 12 0t9-5q0-4-9-7 2-5 9-9-4-3-10-2 4-9 12-11z" fill="url(#fp)" />
    <path d="M20 48q10-6 22 0l16 5q2 4-4 7-8 2-12 7-14-4-22-19z" fill="#fdb13c" />
  </>
);
const Skype = () => (
  <>
    <defs><G id="sk" a="#4ab2ea" b="#2b76cf" /></defs>
    <circle cx="38" cy="37" r="25" fill="#3595da" />
    <circle cx="83" cy="84" r="25" fill="#2b76cf" />
    <circle cx="60" cy="60" r="46" fill="url(#sk)" />
    <text x="60" y="86" textAnchor="middle" fontFamily="Open Sans, sans-serif" fontWeight="700" fontSize="74" fill="#fff">S</text>
  </>
);
const TV = () => (
  <>
    <defs><G id="tv" a="#2b3433" b="#0c0f12" /></defs>
    <Base fill="url(#tv)" />
    <svg x="24" y="40" width="30" height="35" viewBox="0 0 384 512"><path fill="#fff" d="M318.700 268.700c-.2-36.700 16.400-64.400 50-84.800-18.800-26.900-47.200-41.700-84.700-44.600-35.500-2.800-74.300 20.700-88.500 20.700-15 0-49.400-19.700-76.400-19.700C63.300 141.200 4 184.800 4 273.500q0 39.300 14.400 81.200c12.800 36.700 59 126.700 107.200 125.200 25.200-.6 43-17.900 75.800-17.900 31.800 0 48.300 17.900 76.400 17.900 48.600-.7 90.400-82.500 102.600-119.300-65.200-30.700-61.700-90-61.700-91.900zm-56.600-164.200c27.300-32.400 24.800-61.900 24-72.500-24.100 1.400-52 16.400-67.900 34.900-17.500 19.800-27.800 44.300-25.600 71.900 26.100 2 49.900-11.400 69.500-34.300z" /></svg>
    <text x="55" y="75" fontFamily="Inter, sans-serif" fontWeight="500" fontSize="38" letterSpacing="-1" fill="#fff">tv</text>
  </>
);
const BlueStacks = () => (
  <>
    <g strokeLinejoin="round" strokeWidth="10">
      <path d="M60 46l56 33-56 31L4 79z" fill="#4292d0" stroke="#4292d0" />
      <path d="M60 32l56 33-56 31L4 65z" fill="#d93030" stroke="#d93030" />
      <path d="M60 18l56 33-56 31L4 51z" fill="#f5da4a" stroke="#f5da4a" />
      <path d="M60 10l56 29-56 29L4 39z" fill="#93c468" stroke="#93c468" />
    </g>
    <g transform="rotate(-33 60 40)" fontFamily="Open Sans, sans-serif" fontWeight="700" fill="#5d8340">
      <text x="36" y="44" fontSize="35">64</text>
      <text x="46" y="61" fontSize="20">bit</text>
    </g>
  </>
);
const Excel = () => (
  <>
    <path d="M31 14h40v23H31z" fill="#4aa36f" />
    <path d="M71 14h42v23H71z" fill="#63c389" />
    <path d="M31 37h40v24H31z" fill="#347f4d" />
    <path d="M71 37h42v24H71z" fill="#4aa36f" />
    <path d="M31 61h82v23H31z" fill="#347b47" />
    <path d="M31 84h82v22H31z" fill="#2c5a38" />
    <rect x="6" y="33" width="54" height="54" rx="4" fill="#2b7440" />
    <text x="33" y="75" textAnchor="middle" fontFamily="Open Sans, sans-serif" fontWeight="700" fontSize="42" fill="#fff">X</text>
  </>
);
const Trash = () => (
  <>
    <defs>
      <linearGradient id="tr"><stop stopColor="#c9c9cd" /><stop offset=".3" stopColor="#efeff1" /><stop offset=".7" stopColor="#dededf" /><stop offset="1" stopColor="#bdbdc2" /></linearGradient>
    </defs>
    <path d="M17 17Q60-1 103 17L92 106q-2 8-32 8t-32-8z" fill="url(#tr)" />
    <ellipse cx="60" cy="18" rx="42" ry="10" fill="#77777c" />
    <path d="M24 16l14-9 6 6 6-12 14 11 8-11 8 10 10-2 6 8-20 8-16-3-14 4z" fill="#e8e8ea" stroke="#8c8c90" />
    <path d="M50 10l8 10 6-12M74 8l-4 14" stroke="#3a3a40" strokeWidth="3" fill="none" />
    <path d="M34 34l10 60M62 34l-4 66M86 32L76 96" stroke="#fafafa" strokeWidth="5" opacity=".6" />
  </>
);

const DOCK = [
  [Finder, true], [Launchpad], [Safari, true], [ChromeIcon, true], [Mail, true], [FaceTime], [Messages], [Maps], [Photos], [Contacts], [Numbers],
  [Calendar, true], [Reminders, true], [Notes, true], [Music], [Keynote], [Pages], [AppStore], [Settings], [Firefox, true], [Skype, true],
  null, [TV, true], [BlueStacks, true], [Excel, true], null, [Trash],
];

function Dock() {
  return (
    <div className="relative z-20 mt-[2px] ml-[112px] flex h-[152px] w-[3360px] shrink-0 rounded-[44px] border-[3px] border-white/20 bg-[linear-gradient(to_bottom,transparent,rgba(104,146,208,0.5)),linear-gradient(to_right,#657a9f,#7a769f_45%,#8d72a0_78%,#b06e96)] bg-origin-border pt-[8px] pl-[3px] shadow-[0_0_56px_rgba(0,0,0,0.3)]">
      {DOCK.map((d, i) => {
        if (!d) return <div key={i} className="mt-4 mr-[29px] ml-[28px] h-[112px] w-[2px] shrink-0 bg-[#4a3d6c]/70" />;
        const [Icon, running] = d;
        return (
          <div key={i} className="flex w-[129.3px] shrink-0 flex-col items-center">
            <svg viewBox="0 0 120 120" className="size-[120px] overflow-visible drop-shadow-sm">
              <Icon />
            </svg>
            {running && <div className="mt-[9px] size-2 rounded-full bg-[#0b0b3c]" />}
          </div>
        );
      })}
    </div>
  );
}

export default function App() {
  return (
    <div className="flex h-[2240px] w-[3584px] flex-col overflow-hidden bg-[radial-gradient(circle_at_3584px_2060px,#8a3158,transparent_170px),linear-gradient(to_right,#1c3e64,#32426e_60%,#4a4678)] font-['Open_Sans','DejaVu_Sans',sans-serif]">
      <MenuBar />
      <div className="h-[2px] shrink-0 bg-linear-to-r from-[#9c2049] from-10% via-[#2a3f5c] via-25% to-[#1d4a78]" />
      <div className="flex h-[2026px] shrink-0 rounded-br-[24px] bg-linear-to-b from-[#2f2c2f] from-[66px] to-[#d2d2d2] to-[66px]">
        <div className="flex w-[3576px] flex-col overflow-hidden rounded-[20px] border-r border-[#a9a9a9] bg-white">
          <TabStrip />
          <Toolbar />
          <SiteHeader />
          <div className="flex h-[1788px] overflow-hidden">
            <Sidebar />
            <Content />
          </div>
        </div>
      </div>
      <Dock />
    </div>
  );
}
